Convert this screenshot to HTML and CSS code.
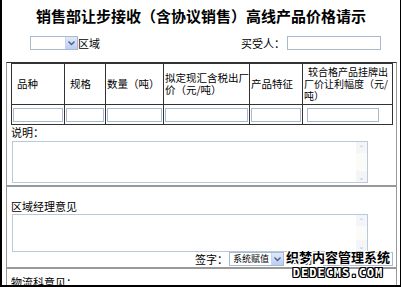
FILE: index.html
```html
<!DOCTYPE html>
<html lang="zh">
<head>
    <meta charset="UTF-8">
    <title>销售部让步接收（含协议销售）高线产品价格请示</title>
    <link rel="stylesheet" href="styles.css">
</head>
<body>

    <div class="page">
        <h1 class="title">销售部让步接收（含协议销售）高线产品价格请示</h1>

        <div class="top-row">
            <div class="group">
                <span class="fake-select small">
                    <span class="sel-text"></span>
                    <span class="sel-arrow"><svg width="7" height="5" viewBox="0 0 7 5"><path d="M0.5 0.5 L3.5 3.5 L6.5 0.5" fill="none" stroke="#4d6185" stroke-width="1.4"/></svg></span>
                </span>
                <span>区域</span>
            </div>
            <div class="group right">
                <span>买受人：</span>
                <input type="text" class="field buyer">
            </div>
        </div>

        <div class="form-box">
            <table class="items">
                <colgroup>
                    <col style="width: 53px">
                    <col style="width: 41px">
                    <col style="width: 58px">
                    <col style="width: 86px">
                    <col style="width: 53px">
                    <col style="width: 90px">
                </colgroup>
                <tr class="head">
                    <td class="c1">品种</td>
                    <td class="c2">规格</td>
                    <td class="c3">数量（吨）</td>
                    <td class="c4">拟定现汇含税出厂价（元/吨）</td>
                    <td class="c5">产品特征</td>
                    <td class="c6">
                        <span class="line center">较合格产品挂牌出</span>
                        <span class="line">厂价让利幅度（元/</span>
                        <span class="line">吨）</span>
                    </td>
                </tr>
                <tr class="inputs">
                    <td><input type="text" class="field cell"></td>
                    <td><input type="text" class="field cell"></td>
                    <td><input type="text" class="field cell"></td>
                    <td><input type="text" class="field cell"></td>
                    <td><input type="text" class="field cell"></td>
                    <td><input type="text" class="field cell short"></td>
                </tr>
            </table>

            <div class="section note">
                <div class="label">说明：</div>
                <div class="area">
                    <textarea></textarea>
                    <div class="scroll">
                        <span class="btn">&#8963;</span>
                        <span class="btn">&#8964;</span>
                    </div>
                </div>
            </div>

            <div class="section manager">
                <div class="label">区域经理意见</div>
                <div class="area">
                    <textarea></textarea>
                    <div class="scroll">
                        <span class="btn">&#8963;</span>
                        <span class="btn">&#8964;</span>
                    </div>
                </div>
                <div class="sign-row">
                    <span>签字：</span>
                    <span class="fake-select sign">
                        <span class="sel-text">系统赋值</span>
                        <span class="sel-arrow"><svg width="7" height="5" viewBox="0 0 7 5"><path d="M0.5 0.5 L3.5 3.5 L6.5 0.5" fill="none" stroke="#4d6185" stroke-width="1.4"/></svg></span>
                    </span>
                    <span class="date">日期：</span>
                    <input type="text" class="field date-in">
                </div>
            </div>

            <div class="section logistics">
                <div class="label">物流科意见：</div>
            </div>
        </div>

        <div class="watermark">
            <div class="wm-cn">织梦内容管理系统</div>
            <div class="wm-en">DEDECMS.COM</div>
        </div>
    </div>

</body>
</html>
```

FILE: styles.css
```css
body {
    margin: 0;
    padding: 0;
    background: #fff;
    color: #000;
    font-family: "Noto Sans CJK SC", "Liberation Sans", sans-serif;
    font-size: 11px;
}

.page {
    position: relative;
    width: 401px;
    height: 287px;
    box-sizing: border-box;
    border-left: 2px solid #000;
    border-right: 1px solid #000;
    border-bottom: 2px solid #000;
    overflow: hidden;
}

.title {
    margin: 0;
    padding-top: 6px;
    font-size: 15px;
    line-height: 20px;
    font-weight: bold;
    text-align: center;
}

.top-row {
    display: flex;
    align-items: center;
    height: 14px;
    margin-top: 10px;
    padding: 0 19px 0 28px;
}

.group {
    display: flex;
    align-items: center;
}

.group.right {
    margin-left: auto;
}

.field {
    box-sizing: border-box;
    height: 14px;
    margin: 0;
    padding: 0;
    border: 1px solid #a7bad0;
    background: #fff;
}

.buyer {
    width: 94px;
    margin-left: 2px;
}

/* select in the old xp look */
.fake-select {
    display: inline-flex;
    box-sizing: border-box;
    height: 14px;
    border: 1px solid #a7bad0;
    background: #fff;
}

.fake-select.small {
    width: 48px;
}

.fake-select .sel-text {
    flex: 1;
    font-size: 9px;
    line-height: 12px;
    padding-left: 3px;
    white-space: nowrap;
}

.sel-arrow {
    width: 11px;
    display: flex;
    align-items: center;
    justify-content: center;
    background: linear-gradient(#dfe8fb, #bccdf3);
    border-left: 1px solid #c6d4f0;
}

.form-box {
    margin-top: 12px;
    margin-left: 4px;
    width: 391px;
    box-sizing: border-box;
    border: 1px solid #999;
    border-top: 1px solid #333;
    border-bottom: none;
}

.items {
    margin-left: 4px;
    width: 382px;
    border-collapse: collapse;
    border: 1px solid #333;
    border-top: none;
    table-layout: fixed;
}

.items td {
    border: 1px solid #333;
    padding: 0;
    vertical-align: middle;
    font-size: 10.5px;
    line-height: 12px;
}

.items tr.head td {
    height: 40px;
}

.items .c1 { padding-left: 5px; }
.items .c2 { padding-left: 5px; }
.items .c3 { padding-left: 1px; }
.items .c4 { padding-left: 1px; }
.items .c5 { padding-left: 1px; }
.items .c6 { padding-left: 1px; font-size: 10px; }

.line {
    display: block;
    white-space: nowrap;
}

.line.center {
    text-align: center;
}

.items tr.inputs td {
    height: 19px;
    padding: 0 1px;
}

.cell {
    width: 100%;
    display: block;
}

.cell.short {
    width: 72px;
    margin-left: 3px;
}

.section {
    padding-left: 4px;
}

.label {
    line-height: 12px;
}

.note {
    padding-top: 1px;
    padding-bottom: 2px;
    border-bottom: 2px solid #999;
}

.area {
    display: flex;
    width: 356px;
    height: 42px;
    margin-top: 3px;
    margin-left: 1px;
    box-sizing: border-box;
    border: 1px solid #b9c8da;
}

.area textarea {
    flex: 1;
    border: none;
    margin: 0;
    padding: 0;
    resize: none;
    outline: none;
}

.scroll {
    width: 11px;
    display: flex;
    flex-direction: column;
    justify-content: space-between;
    background: #fbfbf8;
}

.scroll .btn {
    height: 11px;
    display: flex;
    align-items: center;
    justify-content: center;
    font-size: 8px;
    color: #c5c9d3;
    background: #f3f5f9;
}

.manager {
    padding-top: 13px;
    padding-bottom: 1px;
    border-bottom: 2px solid #999;
}

.manager .area {
    height: 38px;
    margin-top: 2px;
}

.sign-row {
    display: flex;
    align-items: center;
    height: 14px;
    padding-left: 184px;
    white-space: nowrap;
}

.fake-select.sign {
    width: 55px;
    margin-left: 1px;
}

.date {
    margin-left: 6px;
}

.date-in {
    width: 70px;
}

.logistics {
    padding-top: 7px;
}

.watermark {
    position: absolute;
    left: 280px;
    top: 248px;
    width: 112px;
    text-align: center;
    font-weight: bold;
}

.wm-cn {
    font-size: 13px;
    line-height: 18px;
    color: #000;
    text-shadow: 1px 0 #fff, -1px 0 #fff, 0 1px #fff, 0 -1px #fff, 1px 1px #fff, -1px -1px #fff, 1px -1px #fff, -1px 1px #fff;
}

.wm-en {
    font-family: "DejaVu Sans Mono", monospace;
    font-size: 12px;
    line-height: 14px;
    letter-spacing: 1px;
    color: #fff;
    text-shadow: 1px 0 #000, -1px 0 #000, 0 1px #000, 0 -1px #000, 1px 1px #000, -1px -1px #000, 1px -1px #000, -1px 1px #000;
}
```
